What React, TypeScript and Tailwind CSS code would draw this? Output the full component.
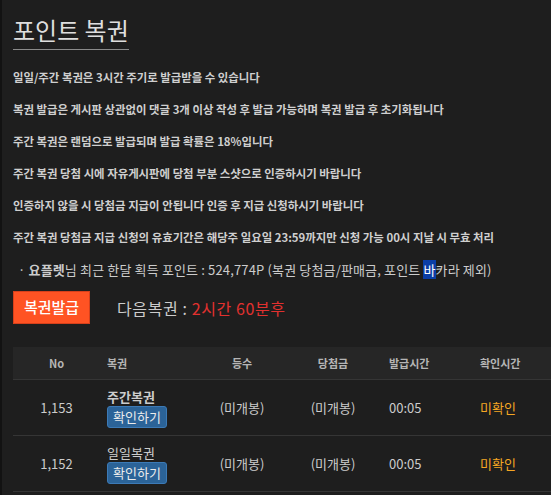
const notices = [
  "일일/주간 복권은 3시간 주기로 발급받을 수 있습니다",
  "복권 발급은 게시판 상관없이 댓글 3개 이상 작성 후 발급 가능하며 복권 발급 후 초기화됩니다",
  "주간 복권은 랜덤으로 발급되며 발급 확률은 18%입니다",
  "주간 복권 당첨 시에 자유게시판에 당첨 부분 스샷으로 인증하시기 바랍니다",
  "인증하지 않을 시 당첨금 지급이 안됩니다 인증 후 지급 신청하시기 바랍니다",
  "주간 복권 당첨금 지급 신청의 유효기간은 해당주 일요일 23:59까지만 신청 가능 00시 지날 시 무효 처리",
];

const rows = [
  { no: "1,153", kind: "주간복권", weekly: true, rank: "(미개봉)", prize: "(미개봉)", issued: "00:05", checked: "미확인" },
  { no: "1,152", kind: "일일복권", weekly: false, rank: "(미개봉)", prize: "(미개봉)", issued: "00:05", checked: "미확인" },
];

const cols = "grid grid-cols-[87px_100px_84px_98px_91px_100px]";

export default function App() {
  return (
    <div
      className="h-[495px] w-[551px] overflow-hidden bg-[#1e1e1e] border-l-2 border-[#121212] pl-[11px]"
      style={{ fontFamily: '"Noto Sans CJK KR", "Noto Sans", sans-serif' }}
    >
      {/* Title */}
      <div className="pt-[16px]">
        <h2 className="inline-block border-b border-[#8a8a8a] pb-[5px] text-[24px] leading-[28px] text-[#dedede]">
          포인트 복권
        </h2>
      </div>

      {/* Notices */}
      <div className="mt-[11px]">
        {notices.map((n) => (
          <p key={n} className="h-[32px] text-[11.4px] leading-[32px] font-bold text-[#cfcfcf] whitespace-nowrap">
            {n}
          </p>
        ))}
      </div>

      {/* Points */}
      <p className="mt-[5px] h-[24px] pl-[5px] text-[13px] leading-[24px] tracking-[0.15px] text-[#cccccc] whitespace-nowrap">
        · <span className="font-bold">요플렛</span>님 최근 한달 획득 포인트 : 524,774P (복권 당첨금/판매금, 포인트{" "}
        <span className="bg-[#0b3ea6] text-white">바</span>카라 제외)
      </p>

      {/* Issue */}
      <div className="mt-[9px] flex items-center">
        <button className="h-[33px] w-[77px] border border-[#d7401b] bg-[#ff5323] text-[15px] font-medium text-white">
          복권발급
        </button>
        <span className="ml-[27px] text-[16px] tracking-[0.6px] text-[#cccccc]">
          다음복권 : <span className="text-[#e2312f]">2시간 60분후</span>
        </span>
      </div>

      {/* Table */}
      <div className="mt-[23px] w-[560px]">
        <div className={`${cols} h-[33px] items-center border-b border-[#353535] bg-[#262626] text-[11px] font-bold text-[#b5b5b5]`}>
          <div className="text-center">No</div>
          <div className="pl-[7px]">복권</div>
          <div className="text-center">등수</div>
          <div className="text-center">당첨금</div>
          <div className="pl-[7px]">발급시간</div>
          <div className="pl-[7px]">확인시간</div>
        </div>
        {rows.map((r) => (
          <div key={r.no} className={`${cols} h-[56px] items-center border-b border-[#353535] text-[13px] text-[#cccccc]`}>
            <div className="text-center">{r.no}</div>
            <div className="pl-[7px]">
              <div className={`leading-[18px] ${r.weekly ? "font-bold" : ""}`}>{r.kind}</div>
              <button className="h-[22px] w-[60px] rounded-[3px] border border-[#3c7ab6] bg-[#2b6398] text-[13px] leading-[20px] text-[#ececec]">
                확인하기
              </button>
            </div>
            <div className="text-center">{r.rank}</div>
            <div className="text-center">{r.prize}</div>
            <div className="pl-[7px]">{r.issued}</div>
            <div className="pl-[7px] text-[#f5a623]">{r.checked}</div>
          </div>
        ))}
      </div>
    </div>
  );
}
